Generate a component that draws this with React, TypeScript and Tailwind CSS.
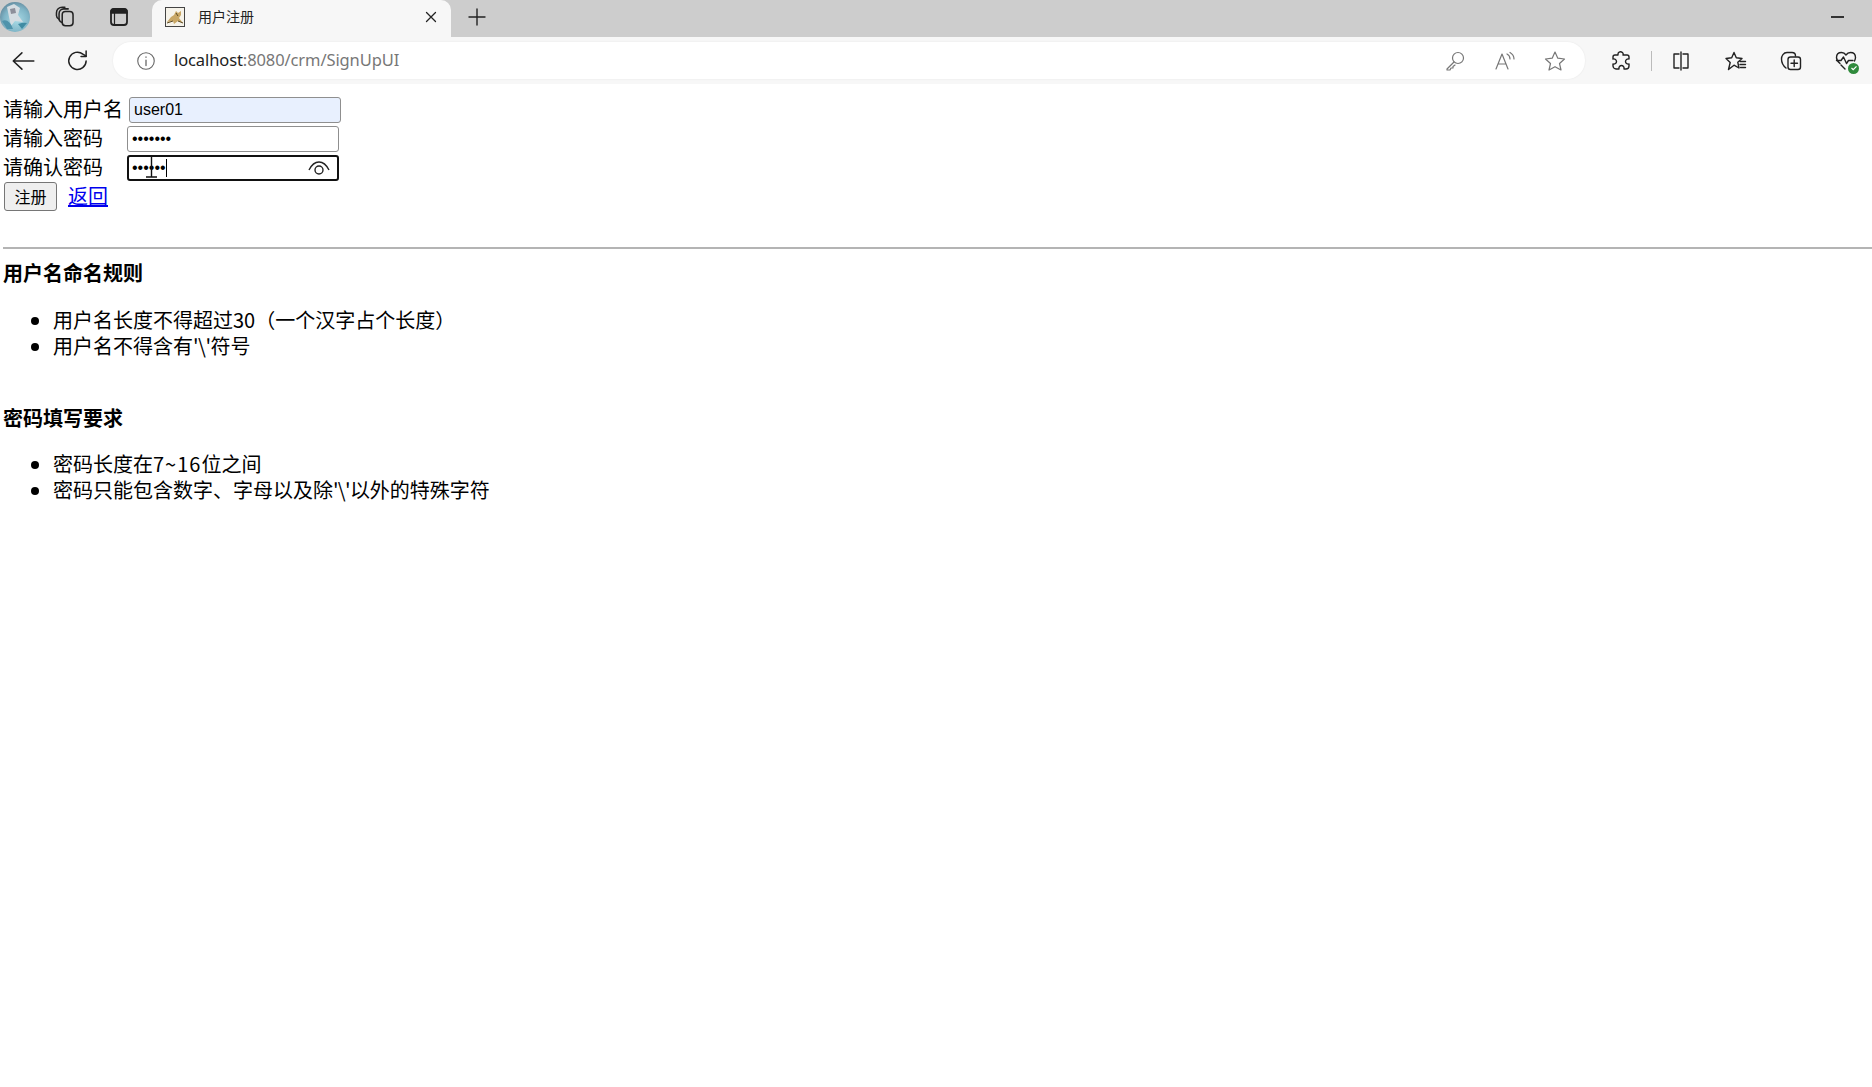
import React from 'react';

const cjk = "font-['Noto_Sans_CJK_SC','Noto_Sans',sans-serif]";
const arial = "font-['Liberation_Sans','Noto_Sans_CJK_SC',sans-serif]";

// Small wrapper so all toolbar icons share the same stroke setup
const Icon = ({ className, size = 24, children }: { className?: string; size?: number; children: React.ReactNode }) => (
  <svg
    width={size}
    height={size}
    viewBox="0 0 24 24"
    fill="none"
    stroke="currentColor"
    strokeWidth="1.4"
    strokeLinecap="round"
    strokeLinejoin="round"
    className={className}
  >
    {children}
  </svg>
);

const Avatar = () => (
  <svg width="30" height="30" viewBox="0 0 30 30" className="shrink-0">
    <defs>
      <radialGradient id="av" cx="0.55" cy="0.6" r="0.7">
        <stop offset="0" stopColor="#a9dbe6" />
        <stop offset="0.6" stopColor="#7fb4c6" />
        <stop offset="1" stopColor="#5a7c90" />
      </radialGradient>
    </defs>
    <circle cx="15" cy="15" r="15" fill="url(#av)" />
    <path d="M7 5 L14 2 L20 6 L18 13 L23 20 L15 19 L11 24 L9 15 Z" fill="#d5dde2" />
    <path d="M10 7 L15 6 L16 11 L11 12 Z" fill="#8d8f9a" />
    <path d="M2 19 Q9 16 13 27 L7 27 Z" fill="#4f93ab" />
    <path d="M18 22 Q24 20 27 21 L22 27 Z" fill="#3f8ba3" />
  </svg>
);

const TomcatIcon = () => (
  <svg width="20" height="20" viewBox="0 0 20 20" className="shrink-0">
    <rect x="0.5" y="0.5" width="19" height="19" fill="#f6f3ea" stroke="#444" />
    <path d="M2 15 L6 10 L9 8 L11 4 L13 6 L16 4 L16 8 L14 11 L18 16 L13 14 L9 17 L8 14 Z" fill="#c9a765" />
    <path d="M2 16 L8 14 M13 14 L18 16 M11 6 L13 9" stroke="#5c4a24" strokeWidth="1" fill="none" />
  </svg>
);

const TabStrip = () => (
  <div className="flex h-[37px] items-start bg-[#cdcdcd] text-[#222]">
    <div className="flex h-[34px] w-[152px] items-center">
      <Avatar />
      <Icon size={26} className="ml-[23px]">
        <rect x="8.5" y="7" width="10" height="13" rx="3" />
        <path d="M8 17 C6 16 5.6 15 5.6 13.5 V9 C5.6 6.5 7.5 4.5 10 4.5 H14" />
        <path d="M5.5 14 C3.8 13 3.2 12 3.2 10.5 V8 C3.2 5 5.5 3 8.5 3 H11" />
      </Icon>
      <Icon className="ml-[28px]">
        <rect x="4" y="4" width="16" height="16" rx="3" strokeWidth="1.8" />
        <path d="M4 8 H20 V7 C20 5 19 4 17 4 H7 C5 4 4 5 4 7 Z" fill="currentColor" />
        <path d="M7.5 8 V20" strokeWidth="1.2" />
      </Icon>
    </div>
    <div className="flex h-[37px] w-[299px] items-center rounded-t-[10px] bg-[#f7f7f7] pb-[3px] pl-[13px] pr-[11px]">
      <TomcatIcon />
      <span className={`mb-[2px] ml-[13px] text-[14px] text-[#222] ${cjk}`}>用户注册</span>
      <Icon size={18} className="ml-auto">
        <path d="M6 6 L18 18 M18 6 L6 18" strokeWidth="1.7" />
      </Icon>
    </div>
    <div className="ml-[3px] flex h-[34px] w-[46px] items-center justify-center">
      <Icon size={24}>
        <path d="M12 4 V20 M4 12 H20" />
      </Icon>
    </div>
    <div className="ml-auto flex h-[34px] w-[46px] items-center">
      <div className="ml-[5px] h-[2px] w-[13px] bg-[#333]" />
    </div>
  </div>
);

const Toolbar = () => (
  <div className="flex h-[47px] items-center bg-[#f7f7f7] text-[#222]">
    <Icon size={26} className="ml-[10px]">
      <path d="M22 12 H3 M11 4.5 L3 12 L11 19.5" />
    </Icon>
    <Icon size={26} className="ml-[29px]">
      <path d="M19.5 12 A8 8 0 1 1 16.5 5.6 L19.5 7.5" />
      <path d="M19.5 2.8 V7.8 H14.8" />
    </Icon>
    <div className="ml-[22px] flex h-[37px] w-[1472px] items-center rounded-[18px] bg-white pl-[22px] pr-[18px] shadow-[0_0_2px_rgba(0,0,0,0.08)]">
      <Icon size={22} className="text-[#666]">
        <circle cx="12" cy="12" r="9" strokeWidth="1.2" />
        <path d="M12 11 V17 M12 7.5 V8" strokeWidth="1.4" />
      </Icon>
      <span className="ml-[17px] text-[16.5px] tracking-[-0.1px] font-['Noto_Sans',sans-serif]">
        <span className="text-[#222]">localhost</span>
        <span className="text-[#777]">:8080/crm/SignUpUI</span>
      </span>
      <div className="ml-auto flex items-center gap-[26px] text-[#777]">
        <Icon>
          <circle cx="15" cy="9" r="5.5" strokeWidth="1.2" />
          <path d="M11 13 L4 20 V21 H7 L8 19 H10 V17.5 L12 16" strokeWidth="1.2" />
        </Icon>
        <Icon>
          <path d="M3 20 L9 5 L15 20 M5 15 H13" strokeWidth="1.2" />
          <path d="M14 5 C16 6 17 8 17 10 M17 3.5 C19.5 5 21 7.5 21 10" strokeWidth="1.2" />
        </Icon>
        <Icon>
          <path d="M12 3 L14.8 9.2 L21.5 10 L16.5 14.5 L18 21 L12 17.7 L6 21 L7.5 14.5 L2.5 10 L9.2 9.2 Z" strokeWidth="1.2" />
        </Icon>
      </div>
    </div>
    <div className="ml-[24px] flex items-center">
      <Icon>
        <path d="M9 5 C9 3 11 2.5 12.5 3 C14 3.5 14.5 5 14 6 H18 C19 6 20 7 20 8 V10 C18 9.5 16.5 11 16.5 12.5 C16.5 14 18 15.5 20 15 V17 C20 18.5 19 20 17 20 H15 C15.5 18 14 16.5 12.5 16.5 C11 16.5 9.5 18 10 20 H7 C5.5 20 4 18.5 4 17 V15 C6 15.5 7.5 14 7.5 12.5 C7.5 11 6 9.5 4 10 V8 C4 7 5 6 6 6 H9 Z" />
      </Icon>
      <div className="ml-[18px] h-[20px] w-px bg-[#bbb]" />
      <Icon className="ml-[17px]">
        <path d="M10 5 H5 V19 H10 M14 5 H19 V19 H14 M12 3 V21" />
      </Icon>
      <Icon className="ml-[31px]">
        <path d="M10 3.5 L12.3 8.8 L18 9.5 L13.8 13.3 L15 19 L10 16.2 L4.5 20.5 L6.2 13.5 L2 9.5 L7.7 8.8 Z" />
        <path d="M16 12.5 H21.5 M16 15.5 H21.5 M16.5 18.5 H21.5" />
      </Icon>
      <Icon className="ml-[31px]">
        <rect x="9" y="8" width="12.5" height="12.5" rx="2.5" />
        <path d="M15.2 11 V17.5 M12 14.2 H18.5" />
        <path d="M7 19 C4.5 17 2.5 14 2.5 10 C2.5 7 4.5 3.5 8 3.5 H13 C15 3.5 16.5 5 16.5 7" />
      </Icon>
      <div className="relative ml-[31px]">
        <Icon>
          <path d="M6 14.5 C3.5 12.5 2.5 10.5 2.5 8.5 C2.5 5.5 4.5 3.5 7.5 3.5 C9.5 3.5 11 4.5 12 6 C13 4.5 14.5 3.5 16.5 3.5 C19.5 3.5 21.5 5.5 21.5 8.5 C21.5 10 21 11 20.5 12" />
          <path d="M2.5 11.5 H7 L9.5 8 L12.5 14.5 L14.5 11.5 H19" />
          <path d="M7 16 L11 20" />
        </Icon>
        <div className="absolute bottom-[-1px] right-[-1px] flex h-[11px] w-[11px] items-center justify-center rounded-full bg-[#2f8a3c]">
          <svg width="8" height="8" viewBox="0 0 8 8" fill="none" stroke="white" strokeWidth="1.2">
            <path d="M1.5 4 L3.2 5.7 L6.5 2.3" />
          </svg>
        </div>
      </div>
    </div>
  </div>
);

// Mouse text cursor sitting on top of the focused field
const IBeam = () => (
  <svg width="13" height="23" viewBox="0 0 13 23" className="absolute left-[145px] top-[71px]" fill="none" stroke="#111" strokeWidth="1.4">
    <path d="M1 1 H12 M6.5 1 V22 M1 22 H12" />
  </svg>
);

const SignUpForm = () => (
  <form className={`relative pl-[3px] pt-[11px] text-[20px] leading-[29px] text-black ${cjk}`}>
    <div className="flex h-[29px] items-center">
      <label className="mb-[2px] w-[126px]">请输入用户名</label>
      <input
        type="text"
        defaultValue="user01"
        className={`h-[26px] w-[212px] rounded-[3px] border border-[#8f8f8f] bg-[#e8f0fe] px-[4px] text-[16px] leading-none outline-none ${arial}`}
      />
    </div>
    <div className="flex h-[29px] items-center">
      <label className="mb-[2px] w-[124px]">请输入密码</label>
      <input
        type="password"
        defaultValue="1234567"
        className={`h-[26px] w-[212px] rounded-[3px] border border-[#8f8f8f] bg-white px-[4px] text-[16px] leading-none outline-none ${arial}`}
      />
    </div>
    <div className="flex h-[29px] items-center">
      <label className="mb-[2px] w-[124px]">请确认密码</label>
      <div className="flex h-[26px] w-[212px] items-center rounded-[3px] border-2 border-[#111] bg-white pl-[3px] pr-[6px]">
        <span className={`text-[16px] leading-none ${arial}`}>••••••</span>
        <span className="h-[18px] w-px bg-black" />
        <svg width="24" height="16" viewBox="0 0 24 16" fill="none" stroke="#222" strokeWidth="1.4" className="ml-auto">
          <path d="M2 10 C5 4 9 2 12 2 C15 2 19 4 22 10" />
          <circle cx="12" cy="10" r="4" />
        </svg>
      </div>
    </div>
    <div className="flex h-[29px] items-center">
      <button type="button" className="ml-[1px] flex h-[29px] w-[53px] items-center justify-center rounded-[3px] border border-[#767676] bg-[#efefef] text-[16px]">
        注册
      </button>
      <a href="#" className="mb-[2px] ml-[11px] text-[#0000ee] underline">返回</a>
    </div>
    <IBeam />
  </form>
);

const Rules = () => (
  <div className={`text-[20px] text-black ${cjk}`}>
    <hr className="ml-[3px] mt-[36px] border-0 border-t-2 border-[#b4b4b4]" />
    <h4 className="ml-[3px] mt-[11px] text-[20px] font-bold leading-[26px]">用户名命名规则</h4>
    <ul className="mt-[21px] list-disc pl-[53px] text-[20px] leading-[26px]">
      <li>用户名长度不得超过30（一个汉字占个长度）</li>
      <li>用户名不得含有<span className="tracking-[-0.5px]">'\'</span>符号</li>
    </ul>
    <h4 className="ml-[3px] mt-[46px] text-[20px] font-bold leading-[26px]">密码填写要求</h4>
    <ul className="mt-[20px] list-disc pl-[53px] text-[20px] leading-[26px]">
      <li>密码长度在<span className="tracking-[1px]">7~16</span>位之间</li>
      <li>密码只能包含数字、字母以及除<span className="tracking-[-0.7px]">'\'</span>以外的特殊字符</li>
    </ul>
  </div>
);

const App: React.FC = () => {
  return (
    <div className="min-h-[1087px] bg-white">
      <TabStrip />
      <Toolbar />
      <SignUpForm />
      <Rules />
    </div>
  );
};

export default App;
